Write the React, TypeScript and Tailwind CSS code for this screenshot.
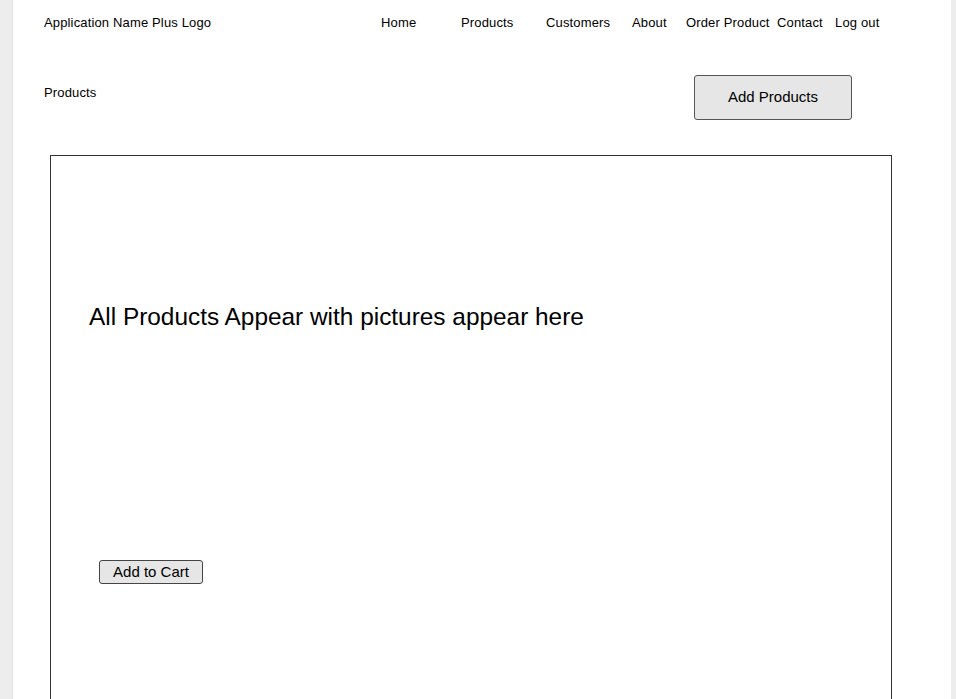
import React from "react";

export default function App() {
  const font = { fontFamily: '"Liberation Sans", Arial, sans-serif' };
  return (
    <div className="w-[956px] h-[699px] bg-[#ededed] flex overflow-hidden" style={font}>
      <div className="ml-[12px] w-[939px] h-full bg-white border-l border-[#e4e4e4] flex flex-col text-black">
        <div className="flex items-center h-[46px] pl-[31px] text-[13px] tracking-[0.15px]">
          <span className="w-[337px] shrink-0">Application Name Plus Logo</span>
          <nav className="flex">
            <span className="w-[80px]">Home</span>
            <span className="w-[85px]">Products</span>
            <span className="w-[86px]">Customers</span>
            <span className="w-[54px]">About</span>
            <span className="w-[91px]">Order Product</span>
            <span className="w-[58px]">Contact</span>
            <span>Log out</span>
          </nav>
        </div>
        <div className="flex items-start pl-[31px] mt-[29px] h-[80px]">
          <span className="w-[650px] shrink-0 text-[13px] mt-[8px] tracking-[0.15px]">Products</span>
          <button className="w-[158px] h-[45px] bg-[#e6e6e6] border border-[#555] rounded-[3px] text-[15px] flex items-center justify-center">
            Add Products
          </button>
        </div>
        <div className="ml-[37px] w-[842px] flex-1 border border-[#333] border-b-0 flex flex-col">
          <div className="pl-[38px] mt-[146px] text-[24.4px] leading-[30px]">
            All Products Appear with pictures appear here
          </div>
          <button className="ml-[48px] mt-[228px] w-[104px] h-[24px] bg-[#e6e6e6] border border-[#444] rounded-[3px] text-[15px] flex items-center justify-center">
            Add to Cart
          </button>
        </div>
      </div>
    </div>
  );
}
